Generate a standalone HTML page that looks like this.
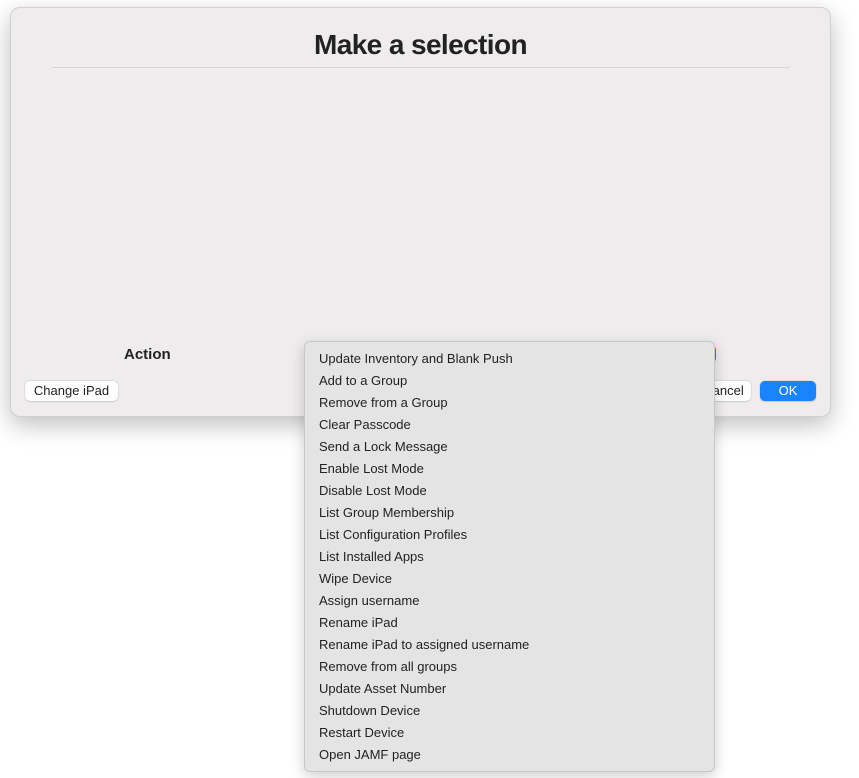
<!DOCTYPE html><html><head><style>
body{margin:0;width:859px;height:778px;background:#fff;position:relative;overflow:hidden;font-family:"Liberation Sans",sans-serif;}
.dlg{position:absolute;left:10px;top:7px;width:819px;height:408px;background:#eeeced;border:1px solid #d0d0d0;border-radius:10px;box-shadow:0 8px 24px rgba(0,0,0,.25);}
.t{position:absolute;left:0;right:0;top:21px;text-align:center;font-size:28px;font-weight:bold;color:#222;letter-spacing:-0.6px}
.hr{position:absolute;left:41px;width:738px;top:59px;height:1px;background:#d4d4d4}
.act{position:absolute;left:113px;top:338px;font-size:15px;font-weight:bold;color:#222}
.btn{position:absolute;background:#fff;border-radius:5px;box-shadow:0 0 0 0.5px #ccc,0 1px 1px rgba(0,0,0,.15);font-size:13px;color:#222;line-height:20px;text-align:center}
.menu{position:absolute;left:304px;top:341px;width:409px;height:429px;background:#e4e4e4;border:1px solid #c8c8c8;border-radius:6px;box-shadow:0 4px 14px rgba(0,0,0,.2);}
.menu div{position:absolute;left:14px;font-size:13px;color:#222;line-height:22px;height:22px}
</style></head><body>
<div class="dlg">
<div class="t">Make a selection</div><div class="hr"></div>
<div class="act">Action</div>
<div class="btn" style="left:14px;top:373px;width:93px">Change iPad</div>
<div class="btn" style="left:670px;top:373px;width:70px;text-align:right">Cancel&nbsp;&nbsp;</div>
<div class="btn" style="left:749px;top:373px;width:56px;background:#1a84ff;color:#fff">OK</div>
<div style="position:absolute;left:697px;top:337px;width:8px;height:18px;background:#1a84ff;border-radius:0 5px 5px 0"></div>
</div>
<div class="menu">
<div style="top:6px">Update Inventory and Blank Push</div>
<div style="top:28px">Add to a Group</div>
<div style="top:50px">Remove from a Group</div>
<div style="top:72px">Clear Passcode</div>
<div style="top:94px">Send a Lock Message</div>
<div style="top:116px">Enable Lost Mode</div>
<div style="top:138px">Disable Lost Mode</div>
<div style="top:160px">List Group Membership</div>
<div style="top:182px">List Configuration Profiles</div>
<div style="top:204px">List Installed Apps</div>
<div style="top:226px">Wipe Device</div>
<div style="top:248px">Assign username</div>
<div style="top:270px">Rename iPad</div>
<div style="top:292px">Rename iPad to assigned username</div>
<div style="top:314px">Remove from all groups</div>
<div style="top:336px">Update Asset Number</div>
<div style="top:358px">Shutdown Device</div>
<div style="top:380px">Restart Device</div>
<div style="top:402px">Open JAMF page</div>
</div>
</body></html>
